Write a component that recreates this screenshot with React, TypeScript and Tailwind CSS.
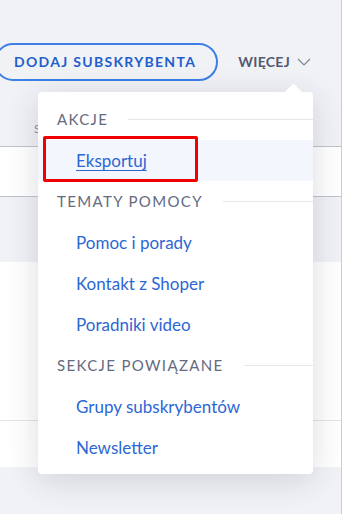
import React from "react";

const Header = ({ label }: { label: string }) => (
  <div className="h-[41px] flex items-center pl-[19px]">
    <span className="text-[15px] tracking-[1.35px] text-[#646a7f] leading-none whitespace-nowrap">{label}</span>
    <div className="flex-1 h-px bg-[#e6e7eb] ml-[20px]" />
  </div>
);

const Item = ({ label, active }: { label: string; active?: boolean }) => (
  <div className={`h-[41px] flex items-center pl-[38px] ${active ? "bg-[#f3f6fc]" : ""}`}>
    <span className={`text-[17px] text-[#2c67d3] leading-none ${active ? "underline underline-offset-[3px]" : ""}`}>{label}</span>
  </div>
);

export default function App() {
  return (
    <div
      className="relative w-[342px] h-[514px] overflow-hidden bg-[#f1f2f6] border-r border-[#c9ccd9]"
      style={{ fontFamily: "Lato, 'Noto Sans', sans-serif" }}
    >
      {/* top action bar */}
      <div className="h-[81px] pt-[43px] flex items-start">
        <div className="ml-[-6px] h-[38px] rounded-full border-2 border-[#3d7fe6] flex items-center pl-[18px] pr-[20px]">
          <span className="text-[14px] font-bold tracking-[1.3px] text-[#1f5fcd] leading-none whitespace-nowrap">DODAJ SUBSKRYBENTA</span>
        </div>
        <div className="ml-[20px] h-[38px] flex items-center gap-[7px]">
          <span className="text-[14px] font-bold tracking-[0.3px] text-[#535a72] leading-none">WIĘCEJ</span>
          <svg width="14" height="8" viewBox="0 0 14 8" fill="none">
            <path d="M1 1l6 6 6-6" stroke="#7d8397" strokeWidth="1.2" />
          </svg>
        </div>
      </div>

      {/* table header area */}
      <div className="h-[66px] border-b border-[#bfc3cf] flex items-center pl-[34px] pt-[30px]">
        <span className="text-[12px] text-[#8a90a4] leading-none">S</span>
      </div>
      <div className="h-[50px] bg-white border-b border-[#bfc3cf]" />
      <div className="h-[65px]" />
      <div className="bg-white">
        <div className="h-[159px] border-b border-[#e3e4e9]" />
        <div className="h-[46px]" />
      </div>

      {/* dropdown menu */}
      <div className="absolute left-[38px] top-[92px] w-[275px] bg-white rounded-[4px] shadow-[0_6px_32px_rgba(30,35,60,0.16)] pt-[7px] pb-[6px]">
        <div className="absolute top-[-6px] left-[249px] w-[13px] h-[13px] bg-white rotate-45 rounded-[2px]" />
        <div className="relative">
          <Header label="AKCJE" />
          <Item label="Eksportuj" active />
          <Header label="TEMATY POMOCY" />
          <Item label="Pomoc i porady" />
          <Item label="Kontakt z Shoper" />
          <Item label="Poradniki video" />
          <Header label="SEKCJE POWIĄZANE" />
          <Item label="Grupy subskrybentów" />
          <Item label="Newsletter" />
        </div>
      </div>

      {/* annotation */}
      <div className="absolute left-[43px] top-[136px] w-[155px] h-[46px] border-[3px] border-[#f00000] rounded-[2px]" />
    </div>
  );
}
